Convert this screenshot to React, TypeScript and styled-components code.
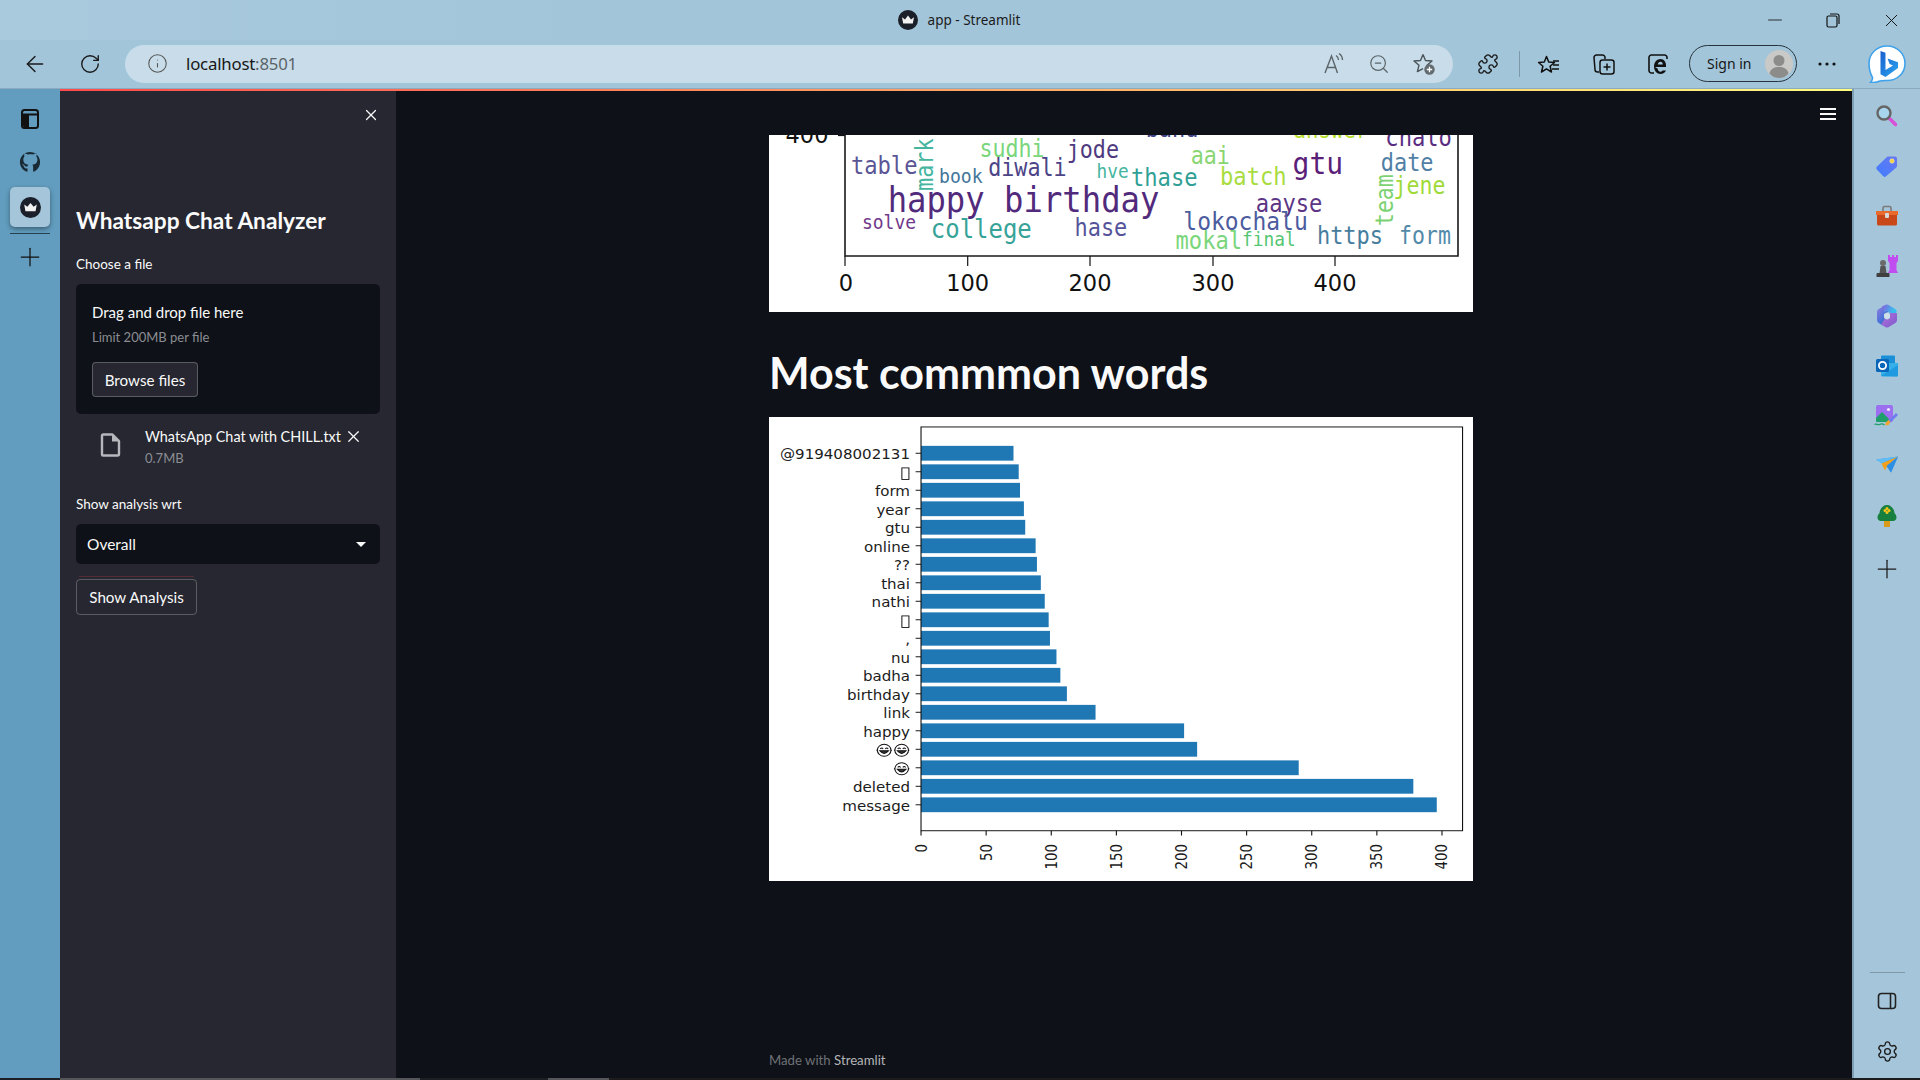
import React from 'react';
import styled, { createGlobalStyle } from 'styled-components';
import { ArrowLeft, RotateCw, Info, ZoomOut, Puzzle, Plus, X, Settings, Minus } from 'lucide-react';

const Global = createGlobalStyle`
  html, body { margin: 0; padding: 0; height: 100%; overflow: hidden; background: #0e1117; }
  #root { height: 100%; }
  * { box-sizing: border-box; }
`;

const UI = `'Lato', 'Noto Sans', sans-serif`;
const CHROME = `'Noto Sans', 'Open Sans', sans-serif`;

const Shell = styled.div`
  height: 100vh; display: flex; flex-direction: column; background: #a3c5da; color: #fafafa; font-family: ${UI};
`;
const TitleBar = styled.div`
  height: 40px; flex: none; display: grid; grid-template-columns: 1fr auto 1fr; align-items: center; color: #1b1b1b;
  background: linear-gradient(90deg, #a9cadd 0%, #a3c5da 30%);
`;
const TitleCenter = styled.div`
  grid-column: 2; display: flex; align-items: center; gap: 10px; font: 400 13.5px ${CHROME}; padding-right: 2px;
`;
const WindowControls = styled.div` grid-column: 3; justify-self: end; display: flex; `;
const WindowButton = styled.div` width: 58px; height: 40px; display: flex; align-items: center; justify-content: center; color: #111; `;
const Toolbar = styled.div`
  height: 49px; flex: none; display: flex; align-items: center; padding: 0 0 1px 7px; border-bottom: 1px solid #8caabd;
`;
const NavButton = styled.div` width: 55px; height: 40px; display: flex; align-items: center; justify-content: center; color: #1a1a1a; `;
const AddressBar = styled.div`
  width: 1328px; height: 38px; margin-left: 8px; flex: none; border-radius: 19px; background: #c8dde9;
  display: flex; align-items: center; padding: 0 7px 0 22px; color: #555;
`;
const AddressText = styled.div` margin-left: 18px; font: 400 16.8px ${CHROME}; color: #161616; letter-spacing: -0.2px; `;
const Port = styled.span` color: #5b6469; `;
const AddressActions = styled.div` margin-left: auto; display: flex; gap: 1px; `;
const ToolButton = styled.div<{ $ml?: number }>`
  width: 44px; height: 40px; flex: none; margin-left: ${p => p.$ml ?? 0}px; display: flex; align-items: center; justify-content: center; color: #1a1a1a;
`;
const ToolSeparator = styled.div` width: 1px; height: 26px; flex: none; background: #7f98a8; margin: 0 7px 0 9px; `;
const SignIn = styled.div`
  width: 108px; height: 37px; margin-left: 9px; flex: none; border: 1.5px solid #26333c; border-radius: 19px;
  display: flex; align-items: center; justify-content: space-between; padding: 0 3px 0 17px; font: 400 14px ${CHROME}; color: #161616;
`;
const Body = styled.div` flex: 1; min-height: 0; display: flex; `;
const Rail = styled.div`
  width: 60px; flex: none; background: #629dbf; padding: 8px 10px 0; display: flex; flex-direction: column; align-items: stretch; color: #111;
`;
const RailItem = styled.div` height: 43px; display: flex; align-items: center; justify-content: center; padding-right: 1px; `;
const RailTile = styled.div`
  height: 40px; margin-top: 4px; border-radius: 5px; background: #a5c6da; box-shadow: 0 2px 5px rgba(0,0,0,.4);
  display: flex; align-items: center; justify-content: center;
`;
const RailDivider = styled.div` height: 1px; margin-top: 6px; background: #26404f; `;
const RailPlus = styled.div` height: 46px; display: flex; align-items: center; justify-content: center; color: #111; padding-right: 1px; `;
const Page = styled.div` flex: 1; min-width: 0; display: flex; flex-direction: column; `;
const Decoration = styled.div` height: 2px; flex: none; background: linear-gradient(90deg, #ff4b4b, #fffd80); `;
const PageRow = styled.div` flex: 1; min-height: 0; display: flex; `;
const Sidebar = styled.aside` width: 336px; flex: none; background: #262730; padding: 15px 16px 0; display: flex; flex-direction: column; `;
const CloseRow = styled.div` display: flex; justify-content: flex-end; height: 16px; color: #fafafa; `;
const SideTitle = styled.h2` margin: 81px 0 0; font: 700 22.7px/36px ${UI}; color: #fafafa; `;
const FieldLabel = styled.div<{ $mt: number }>` margin-top: ${p => p.$mt}px; font: 400 13.5px/20px ${UI}; color: #fafafa; `;
const Uploader = styled.div` margin-top: 10px; height: 130px; background: #0e1117; border-radius: 5px; padding: 16px 16px 0; `;
const DropTitle = styled.div` font: 400 15px/24px ${UI}; `;
const DropLimit = styled.div` margin-top: 3px; font: 400 13px/20px ${UI}; color: #8b8d93; `;
const OutlineButton = styled.div<{ $w: number; $h: number; $bg?: string }>`
  width: ${p => p.$w}px; height: ${p => p.$h}px; display: flex; align-items: center; justify-content: center;
  border: 1px solid rgba(250,250,250,.25); border-radius: 4px; background: ${p => p.$bg ?? 'transparent'}; font: 400 15.2px ${UI}; color: #fafafa;
`;
const BrowseWrap = styled.div` margin-top: 15px; `;
const FileRow = styled.div` display: flex; padding: 12px 0 0 24px; `;
const FileIconBox = styled.div` width: 21px; height: 24px; margin: 7px 24px 0 0; color: #b6b8bd; flex: none; `;
const FileText = styled.div` display: flex; flex-direction: column; `;
const FileNameRow = styled.div` display: flex; align-items: center; height: 20px; font: 400 14.4px ${UI}; white-space: nowrap; `;
const FileX = styled.span` margin-left: 3px; display: flex; color: #fafafa; `;
const FileSize = styled.div` margin-top: 3px; font: 400 13px/18px ${UI}; color: #8b8d93; `;
const Select = styled.div`
  margin-top: 10px; height: 40px; background: #0e1117; border-radius: 5px; padding: 0 14px 0 11px; display: flex; align-items: center; justify-content: space-between; font: 400 15.5px ${UI};
`;
const Caret = styled.div` width: 0; height: 0; border-left: 5px solid transparent; border-right: 5px solid transparent; border-top: 5px solid #fafafa; `;
const FocusLine = styled.div` width: 115px; height: 1px; margin: 12px 0 2px 3px; background: rgba(255,75,75,.22); `;
const Main = styled.main` flex: 1; min-width: 0; position: relative; background: #0e1117; padding: 44px 0 8px 373px; display: flex; flex-direction: column; `;
const Hamburger = styled.div` position: absolute; top: 17px; right: 16px; width: 16px; display: flex; flex-direction: column; gap: 3px; `;
const HamburgerBar = styled.div` height: 2px; background: #fafafa; `;
const Figure = styled.svg` display: block; width: 704px; flex: none; background: #fff; `;
const Heading = styled.h1` margin: 37px 0 20px; font: 700 43px/48px ${UI}; color: #fafafa; white-space: nowrap; `;
const Footer = styled.div` margin-top: auto; font: 400 13.2px/20px ${UI}; color: #6f7177; `;
const FooterBrand = styled.span` color: #b4b5b8; `;
const SidePanel = styled.div`
  width: 68px; flex: none; background: #a5c6da; border-left: 2px solid #7f9fb3; padding: 2px 0 2px; display: flex; flex-direction: column; align-items: center; color: #1a1a1a;
`;
const SideItem = styled.div<{ $mt?: number }>` height: 50px; width: 100%; flex: none; margin-top: ${p => p.$mt ?? 0}px; display: flex; align-items: center; justify-content: center; `;
const SideDivider = styled.div` margin-top: auto; margin-bottom: 3px; width: 35px; height: 1px; background: #7f98a8; flex: none; `;
const BottomStrip = styled.div` height: 2px; flex: none; display: flex; background: #1c1c1c; `;
const StripPiece = styled.div<{ $w: number; $grey?: boolean }>` width: ${p => p.$w}px; background: ${p => (p.$grey ? '#55565a' : '#1c2024')}; `;

/* ---------- chart data ---------- */
const BARS: [string, number][] = [
  ['@919408002131', 71], ['\u25A1', 75], ['form', 76], ['year', 79], ['gtu', 80], ['online', 88], ['??', 89], ['thai', 92], ['nathi', 95],
  ['\u25A1', 98], [',', 99], ['nu', 104], ['badha', 107], ['birthday', 112], ['link', 134], ['happy', 202], ['EE', 212], ['E', 290], ['deleted', 378], ['message', 396],
];

type Word = { t: string; l: number; r: number; b: number; s: number; c: string };
const WORDS: Word[] = [
  { t: 'band', l: 840, r: 955, b: 48, s: 24, c: '#414487' },
  { t: 'answer', l: 1162, r: 1325, b: 52, s: 23, c: '#b5de2b' },
  { t: 'chalo', l: 1362, r: 1507, b: 74, s: 24, c: '#5a2d82' },
  { t: 'table', l: 198, r: 343, b: 158, s: 24, c: '#5a5595' },
  { t: 'sudhi', l: 478, r: 620, b: 108, s: 24, c: '#7ad67a' },
  { t: 'jode', l: 668, r: 782, b: 110, s: 24, c: '#4f3a80' },
  { t: 'diwali', l: 497, r: 668, b: 165, s: 24, c: '#4d4488' },
  { t: 'book', l: 390, r: 485, b: 185, s: 20, c: '#43759a' },
  { t: 'hve', l: 733, r: 803, b: 170, s: 20, c: '#45b5a0' },
  { t: 'thase', l: 808, r: 953, b: 195, s: 24, c: '#30a096' },
  { t: 'aai', l: 938, r: 1023, b: 128, s: 24, c: '#88d572' },
  { t: 'batch', l: 1002, r: 1147, b: 192, s: 24, c: '#a8dc40' },
  { t: 'gtu', l: 1160, r: 1270, b: 158, s: 31, c: '#5a2078' },
  { t: 'date', l: 1352, r: 1467, b: 150, s: 24, c: '#5080a6' },
  { t: 'jene', l: 1380, r: 1493, b: 218, s: 24, c: '#a0da39' },
  { t: 'happy birthday', l: 278, r: 870, b: 272, s: 35, c: '#522a7c' },
  { t: 'aayse', l: 1080, r: 1225, b: 272, s: 24, c: '#5c3585' },
  { t: 'solve', l: 222, r: 340, b: 325, s: 20, c: '#70398a' },
  { t: 'college', l: 372, r: 592, b: 352, s: 26, c: '#36a398' },
  { t: 'hase', l: 685, r: 800, b: 345, s: 24, c: '#55549a' },
  { t: 'lokochalu', l: 922, r: 1193, b: 327, s: 25, c: '#4c5c9e' },
  { t: 'mokal', l: 905, r: 1050, b: 383, s: 24, c: '#7ad67a' },
  { t: 'final', l: 1050, r: 1167, b: 375, s: 20, c: '#55c672' },
  { t: 'https', l: 1213, r: 1357, b: 368, s: 24, c: '#477d9d' },
  { t: 'form', l: 1392, r: 1505, b: 368, s: 24, c: '#528aaa' },
];
const rx = (z: number) => z / 2.178 - 9;
const ry = (z: number) => z / 3 - 14;

const WordCloudFigure = () => (
  <Figure viewBox="0 0 704 177" height={177}>
    <g fontFamily="'DejaVu Sans Mono', monospace">
      {WORDS.map(w => (
        <text key={w.t} x={rx(w.l)} y={ry(w.b)} fontSize={w.s} fill={w.c} textLength={rx(w.r) - rx(w.l)} lengthAdjust="spacingAndGlyphs">{w.t}</text>
      ))}
      <text transform="translate(164 56) rotate(-90)" fontSize={24} fill="#45b5a0" textLength={52.7} lengthAdjust="spacingAndGlyphs">mark</text>
      <text transform="translate(624 91) rotate(-90)" fontSize={24} fill="#7cd272" textLength={51.7} lengthAdjust="spacingAndGlyphs">team</text>
    </g>
    <path d="M76 0V121H689V0" fill="none" stroke="#1a1a1a" strokeWidth="1.6" />
    {[76, 198.7, 321, 444, 566].map(x => <path key={x} d={`M${x} 121V131`} stroke="#111" strokeWidth="1.2" />)}
    <path d="M69 0.5H76" stroke="#111" strokeWidth="1.2" />
    <g fontFamily="'DejaVu Sans', sans-serif" fontSize="22.500" fill="#111" textAnchor="middle">
      <text x={77} y={156}>0</text>
      <text x={198.7} y={156}>100</text>
      <text x={321} y={156}>200</text>
      <text x={444} y={156}>300</text>
      <text x={566} y={156}>400</text>
      <text x={38} y={8}>400</text>
    </g>
  </Figure>
);

const Grin = ({ cx, cy }: { cx: number; cy: number }) => (
  <g stroke="#111" strokeWidth="1" fill="none">
    <circle cx={cx} cy={cy} r={6.2} fill="#fff" />
    <path d={`M${cx - 3.6} ${cy - 1.4}q1.5-1.8 2.6 0M${cx + 1} ${cy - 1.4}q1.5-1.8 2.6 0`} />
    <path d={`M${cx - 4} ${cy + .6}H${cx + 4}Q${cx} ${cy + 6} ${cx - 4} ${cy + .6}Z`} fill="#333" />
    <path d={`M${cx - 7} ${cy}h1M${cx + 6} ${cy}h1`} />
  </g>
);

const X0 = 138.2, XU = 1.184, Y0 = 37.5, YS = 19.14, BH = 15.3;
const BarChartFigure = () => (
  <Figure viewBox="0 0 640 480" height={464} preserveAspectRatio="none">
    {BARS.map(([label, v], i) => {
      const cy = Y0 + i * YS;
      return (
        <g key={i}>
          <rect x={X0} y={cy - BH / 2} width={v * XU} height={BH} fill="#1f77b4" />
          <path d={`M${X0 - 4.9} ${cy}H${X0}`} stroke="#111" strokeWidth="1" />
          {label === 'E' || label === 'EE' ? (
            <>
              <Grin cx={120.6} cy={cy + 1} />
              {label === 'EE' && <Grin cx={104.7} cy={cy + 1} />}
            </>
          ) : label === '\u25A1' ? (
            <rect x={120.8} y={cy - 4} width={6.4} height={12} fill="#fff" stroke="#111" strokeWidth="0.9" />
          ) : (
            <text x={128.2} y={cy + 6.3} textAnchor="end" fontFamily="'DejaVu Sans', sans-serif" fontSize="13.7" fill="#1c1c1c">{label}</text>
          )}
        </g>
      );
    })}
    <rect x={X0} y={10.3} width={492.3} height={417.7} fill="none" stroke="#111" strokeWidth="1" />
    {[0, 50, 100, 150, 200, 250, 300, 350, 400].map(v => {
      const x = X0 + v * XU;
      return (
        <g key={v}>
          <path d={`M${x} 428V433`} stroke="#111" strokeWidth="1" />
          <text transform={`translate(${x + 5} 441.7) rotate(-90)`} textAnchor="end" fontFamily="'DejaVu Sans', sans-serif" fontSize="13.89" fill="#1c1c1c">{v}</text>
        </g>
      );
    })}
  </Figure>
);

/* ---------- icons ---------- */
const StreamlitMark = ({ size = 20 }: { size?: number }) => (
  <svg width={size} height={size} viewBox="0 0 20 20">
    <circle cx="10" cy="10" r="10" fill="#1b1f2a" />
    <path d="M4 7.2l3 2.2L10 5.6l3 3.8 3-2.2-1.2 6.4H5.2z" fill="#f2f2f2" />
  </svg>
);
const TabsIcon = () => (
  <svg width="20" height="22" viewBox="0 0 20 22" fill="none">
    <rect x="2" y="2" width="16" height="18" rx="2.5" stroke="#111" strokeWidth="2" />
    <path d="M2 6.5h16" stroke="#111" strokeWidth="2" />
    <path d="M3 7h6v12H4.5A1.5 1.5 0 0 1 3 17.5z" fill="#111" />
  </svg>
);
const GithubMark = () => (
  <svg width="22" height="22" viewBox="0 0 24 24">
    <path fill="#1a2a35" d="M12 1C5.9 1 1 5.9 1 12c0 4.9 3.2 9 7.5 10.5.5.1.8-.2.8-.5v-3c-3 .6-3.7-1.3-3.9-2-.1-.4-.7-1.4-1.2-1.7-.4-.2-1-.8 0-.8.9 0 1.6.9 1.8 1.2 1.1 1.8 2.8 1.3 3.4 1 .1-.8.4-1.3.8-1.6-2.7-.3-5.5-1.4-5.5-6 0-1.3.5-2.4 1.2-3.2-.1-.3-.5-1.5.1-3.2 0 0 1-.3 3.4 1.2 1-.3 2-.4 3-.4s2 .1 3 .4c2.3-1.6 3.4-1.2 3.4-1.2.7 1.7.2 2.9.1 3.2.8.8 1.2 1.9 1.2 3.2 0 4.6-2.8 5.7-5.5 6 .4.4.8 1.1.8 2.2V22c0 .3.2.7.8.5C19.8 21 23 16.9 23 12 23 5.9 18.1 1 12 1z" />
  </svg>
);
const ReadAloud = () => (
  <svg width="24" height="24" viewBox="0 0 24 24" fill="none" stroke="#5b6469" strokeWidth="1.4">
    <path d="M3 21L9.5 4l6 17M5.2 15.5h8.6" />
    <path d="M14 3.5c1.6 1 2.5 2.6 2.5 4.5M17 1.5c2.2 1.4 3.5 3.8 3.5 6.5" />
  </svg>
);
const FavAdd = () => (
  <svg width="24" height="24" viewBox="0 0 24 24" fill="none">
    <path d="M11 2.500l2.500 6 6.500.5-5 4.200 1 3M11 2.500L8.500 8.500l-6.500.5 5 4.200-1.600 6.400L11 16.600" stroke="#4a545a" strokeWidth="1.4" strokeLinejoin="round" />
    <circle cx="17.500" cy="17.500" r="5.200" fill="#626b70" />
    <path d="M17.500 14.800v5.400M14.800 17.500h5.400" stroke="#fff" strokeWidth="1.3" />
  </svg>
);
const FavList = () => (
  <svg width="24" height="24" viewBox="0 0 24 24" fill="none" stroke="#111" strokeWidth="1.5" strokeLinejoin="round">
    <path d="M9.500 2.500l2.300 5.600 5.700.4-4.400 3.800 1.400 5.700-5-3.100-5 3.100 1.400-5.700L1.600 8.500l5.700-.4z" transform="translate(0 2)" />
    <path d="M16 9h6M16 13h6M15 17h7" />
  </svg>
);
const Collections = () => (
  <svg width="24" height="24" viewBox="0 0 24 24" fill="none" stroke="#111" strokeWidth="1.5" strokeLinejoin="round">
    <path d="M7 20H5.500A2.500 2.500 0 0 1 3 17.500L2 5.500A2.500 2.500 0 0 1 4.500 3h6A2.500 2.500 0 0 1 13 5.500V7" />
    <rect x="8" y="8" width="14" height="14" rx="2.500" />
    <path d="M15 11.500v7M11.500 15h7" />
  </svg>
);
const IEIcon = () => (
  <svg width="24" height="24" viewBox="0 0 24 24" fill="none">
    <path d="M8 21H5.500A2.500 2.500 0 0 1 3 18.500V5.500A2.500 2.500 0 0 1 5.500 3h13A2.500 2.500 0 0 1 21 5.500V7" stroke="#111" strokeWidth="1.6" />
    <path d="M9 15h11c.5-5-2-8-5.500-8S8 10 8 14.500s3 7.500 6.500 7.500c2.600 0 4.500-1.300 5.500-3.500h-3.500c-.5.8-1.200 1.200-2 1.200-1.700 0-2.700-1.200-2.700-2.900zM11.800 12.500c.2-1.500 1.300-2.800 2.700-2.800 1.500 0 2.300 1.200 2.300 2.800z" fill="#111" fillRule="evenodd" />
  </svg>
);
const Avatar = () => (
  <svg width="28" height="28" viewBox="0 0 28 28">
    <circle cx="14" cy="14" r="14" fill="#c9c9c7" />
    <circle cx="14" cy="10.500" r="5.500" fill="#8c8c8a" />
    <path d="M4.500 23.500c1-5 5-6.500 9.500-6.500s8.500 1.500 9.500 6.500c-2.500 3-5.700 4.500-9.500 4.500s-7-1.500-9.500-4.500z" fill="#8c8c8a" />
  </svg>
);
const BingLogo = () => (
  <svg width="38" height="38" viewBox="0 0 38 38">
    <defs>
      <linearGradient id="bg1" x1="0" y1="0" x2="1" y2="1"><stop offset="0" stopColor="#1a5fd0" /><stop offset="1" stopColor="#2aa6ee" /></linearGradient>
    </defs>
    <path d="M19 1c10 0 18 7.500 18 17.500 0 10-8 17-18 17-2.500 0-4.500-.2-7 .6-3 1-7 1.700-9.500 1.500 1.500-1.600 2.300-3.400 2-5.300C2.500 29 1 24 1 18.500 1 8.500 9 1 19 1z" fill="#fff" stroke="#3fa2ea" strokeWidth="1.600" />
    <path d="M12.500 6l5 1.800v17.200l7.500-4.400-3.400-1.700-2.100-5.300 10.500 3.700v5.600L17.500 32l-5-2.800z" fill="url(#bg1)" />
  </svg>
);
const Magnifier = () => (
  <svg width="24" height="24" viewBox="0 0 24 24">
    <path d="M13.500 13.500l7 7" stroke="#d84fd8" strokeWidth="3.500" strokeLinecap="round" />
    <circle cx="9" cy="9" r="6.500" fill="#a8d6ee" stroke="#666" strokeWidth="2.400" />
  </svg>
);
const Tag = () => (
  <svg width="24" height="24" viewBox="0 0 24 24">
    <defs><linearGradient id="tg" x1="0" y1="1" x2="1" y2="0"><stop offset="0" stopColor="#3f7dff" /><stop offset="1" stopColor="#6a78f0" /></linearGradient></defs>
    <path d="M12.500 2.500H20a2 2 0 0 1 2 2v7.500a2 2 0 0 1-.7 1.500L11 22.300a2 2 0 0 1-2.700 0L1.800 15.500a2 2 0 0 1 0-2.700z" fill="url(#tg)" />
    <circle cx="17" cy="7" r="2.200" fill="#f7d23e" stroke="#f7f0b0" strokeWidth=".6" />
  </svg>
);
const Toolbox = () => (
  <svg width="24" height="22" viewBox="0 0 24 22">
    <path d="M8 6V3a1.500 1.500 0 0 1 1.500-1.500h5A1.500 1.500 0 0 1 16 3v3" fill="none" stroke="#7a7a7a" strokeWidth="1.600" />
    <path d="M1 6h22v4H1z" fill="#e86a2c" />
    <path d="M2 10h20v9a1.500 1.500 0 0 1-1.500 1.500h-17A1.500 1.500 0 0 1 2 19z" fill="#c8481a" />
    <rect x="10" y="8" width="4" height="5" rx="1" fill="#d9d9d9" />
  </svg>
);
const Chess = () => (
  <svg width="24" height="24" viewBox="0 0 24 24">
    <path d="M14 2h2v2h2V2h2v2h2V2h2v6l-1.500 2v7l1.500 3H14l1.500-3v-7L14 8z" fill="#c04df0" transform="translate(-1 -1)" />
    <circle cx="8" cy="9" r="3" fill="#6a6a6a" />
    <path d="M5.500 12h5l1 7h-7z" fill="#555" />
    <path d="M2.500 19h11a1 1 0 0 1 1 1v3h-13v-3a1 1 0 0 1 1-1z" fill="#3f3f3f" />
  </svg>
);
const M365 = () => (
  <svg width="22" height="24" viewBox="0 0 22 24" fill="none">
    <defs>
      <linearGradient id="m1" x1="0" y1="0" x2="0.6" y2="1"><stop offset="0" stopColor="#7a78e0" /><stop offset="1" stopColor="#2f6fd0" /></linearGradient>
      <linearGradient id="m2" x1="0" y1="0" x2="1" y2="0.4"><stop offset="0" stopColor="#7a6fe0" /><stop offset="1" stopColor="#38bdee" /></linearGradient>
      <linearGradient id="m3" x1="0" y1="0" x2="1" y2="1"><stop offset="0" stopColor="#b06fd8" /><stop offset="1" stopColor="#8a5fd0" /></linearGradient>
    </defs>
    <path d="M11 4.500L4.500 8v8l4 2.500" stroke="url(#m1)" strokeWidth="7" strokeLinejoin="round" />
    <path d="M7 5.500L11 3.500l6.500 4-2 3" stroke="url(#m2)" strokeWidth="6" strokeLinejoin="round" />
    <path d="M17.500 9v7L11 20l-4-2.500" stroke="url(#m3)" strokeWidth="7" strokeLinejoin="round" />
    <circle cx="11" cy="12" r="3" fill="#cfe0ea" />
  </svg>
);
const Outlook = () => (
  <svg width="24" height="24" viewBox="0 0 24 24">
    <rect x="6" y="1.500" width="14" height="10" rx="1" fill="#1a8fd8" />
    <path d="M6 9h17v12a1.500 1.500 0 0 1-1.500 1.500H7.500A1.500 1.500 0 0 1 6 21z" fill="#36b0e8" />
    <path d="M6 22l17-11v10a1.500 1.500 0 0 1-1.500 1.500z" fill="#1e9ae0" />
    <rect x="1" y="5" width="13" height="13" rx="1.500" fill="#0a66b8" />
    <circle cx="7.500" cy="11.500" r="3.600" fill="none" stroke="#fff" strokeWidth="1.800" />
  </svg>
);
const Designer = () => (
  <svg width="26" height="24" viewBox="0 0 26 24">
    <rect x="2" y="1" width="17" height="17" rx="2" fill="#9b6ff0" />
    <circle cx="14.500" cy="5.500" r="1.600" fill="#f0e8ff" />
    <path d="M2 14l6-6 7 7-2 3H3a1 1 0 0 1-1-1z" fill="#1f9f6a" />
    <path d="M14 17l8-8 2 2-8 8z" fill="#6f7cf0" />
    <path d="M11.500 19l3-3 2 2-2 3-3 .5z" fill="#f4a62a" />
    <path d="M0.500 20.500c2-1.500 3 1 5 0s3-1 5 .5" fill="none" stroke="#1f9f6a" strokeWidth="1.300" />
  </svg>
);
const PlaneIcon = () => (
  <svg width="24" height="20" viewBox="0 0 24 20">
    <path d="M1 3.500L23 .5 16 16.500 11.500 10z" fill="#3aa0ef" />
    <path d="M1 3.500L23 .5 6.500 7.500z" fill="#5fbcf5" />
    <path d="M23 .5L6.500 7.500l3.500 7 2.500-5z" fill="#f4a01c" />
    <path d="M23 .5L11.500 10 16 16.500z" fill="#2f8fe4" />
  </svg>
);
const TreeIcon = () => (
  <svg width="20" height="24" viewBox="0 0 20 24">
    <rect x="7" y="16" width="6" height="7" fill="#d99a1a" />
    <path d="M10 1c4 0 7 3.500 7.500 8 1.500 1.500 2 3 2 4.500 0 2-1.500 3.500-3.500 3.500H4c-2 0-3.500-1.500-3.500-3.500 0-1.500.5-3 2-4.500C3 4.500 6 1 10 1z" fill="#17803f" />
    <g fill="#f6c418"><circle cx="10" cy="4.500" r="1.500" /><circle cx="10" cy="8.500" r="1.500" /><circle cx="8" cy="6.500" r="1.500" /><circle cx="12" cy="6.500" r="1.500" /></g>
  </svg>
);
const SplitPanel = () => (
  <svg width="20" height="18" viewBox="0 0 20 18" fill="none" stroke="#222" strokeWidth="1.600">
    <rect x="1.500" y="1.500" width="17" height="15" rx="3" />
    <path d="M13.500 1.500v15" />
  </svg>
);
const FileGlyph = () => (
  <svg width="21" height="24" viewBox="0 0 21 24" fill="none" stroke="currentColor" strokeWidth="2.400" strokeLinejoin="round">
    <path d="M2 2.500a1 1 0 0 1 1-1h9.500L19 8v13a1.500 1.500 0 0 1-1.500 1.500H3A1 1 0 0 1 2 21.500z" />
    <path d="M12 1.500V8.500h7" fill="currentColor" stroke="none" />
  </svg>
);

export default function App() {
  return (
    <Shell>
      <Global />
      <TitleBar>
        <TitleCenter><StreamlitMark />app - Streamlit</TitleCenter>
        <WindowControls>
          <WindowButton><Minus size={22} strokeWidth={0.9} /></WindowButton>
          <WindowButton>
            <svg width="14" height="15" viewBox="0 0 14 15" fill="none" stroke="#111" strokeWidth="1.2">
              <rect x="1" y="3" width="10" height="11" rx="1.500" />
              <path d="M4 1h7a2 2 0 0 1 2 2v8" />
            </svg>
          </WindowButton>
          <WindowButton><X size={21} strokeWidth={1.1} /></WindowButton>
        </WindowControls>
      </TitleBar>
      <Toolbar>
        <NavButton><ArrowLeft size={26} strokeWidth={1.3} /></NavButton>
        <NavButton><RotateCw size={22} strokeWidth={1.5} /></NavButton>
        <AddressBar>
          <Info size={21} strokeWidth={1.2} />
          <AddressText>localhost<Port>:8501</Port></AddressText>
          <AddressActions>
            <ToolButton><ReadAloud /></ToolButton>
            <ToolButton><ZoomOut size={22} strokeWidth={1.3} color="#5b6469" /></ToolButton>
            <ToolButton><FavAdd /></ToolButton>
          </AddressActions>
        </AddressBar>
        <ToolButton $ml={13}><Puzzle size={22} strokeWidth={1.5} /></ToolButton>
        <ToolSeparator />
        <ToolButton><FavList /></ToolButton>
        <ToolButton $ml={11}><Collections /></ToolButton>
        <ToolButton $ml={10}><IEIcon /></ToolButton>
        <SignIn>Sign in<Avatar /></SignIn>
        <ToolButton $ml={8}>
          <svg width="18" height="4" viewBox="0 0 18 4" fill="#111"><circle cx="2" cy="2" r="1.600" /><circle cx="9" cy="2" r="1.600" /><circle cx="16" cy="2" r="1.600" /></svg>
        </ToolButton>
        <ToolButton $ml={16}><BingLogo /></ToolButton>
      </Toolbar>
      <Body>
        <Rail>
          <RailItem><TabsIcon /></RailItem>
          <RailItem><GithubMark /></RailItem>
          <RailTile><StreamlitMark size={21} /></RailTile>
          <RailDivider />
          <RailPlus><Plus size={30} strokeWidth={1} /></RailPlus>
        </Rail>
        <Page>
          <Decoration />
          <PageRow>
            <Sidebar>
              <CloseRow><X size={18} strokeWidth={1.6} /></CloseRow>
              <SideTitle>Whatsapp Chat Analyzer</SideTitle>
              <FieldLabel $mt={15}>Choose a file</FieldLabel>
              <Uploader>
                <DropTitle>Drag and drop file here</DropTitle>
                <DropLimit>Limit 200MB per file</DropLimit>
                <BrowseWrap><OutlineButton $w={106} $h={35} $bg="#262730">Browse files</OutlineButton></BrowseWrap>
              </Uploader>
              <FileRow>
                <FileIconBox><FileGlyph /></FileIconBox>
                <FileText>
                  <FileNameRow>WhatsApp Chat with CHILL.txt<FileX><X size={19} strokeWidth={1.5} /></FileX></FileNameRow>
                  <FileSize>0.7MB</FileSize>
                </FileText>
              </FileRow>
              <FieldLabel $mt={27}>Show analysis wrt</FieldLabel>
              <Select>Overall<Caret /></Select>
              <FocusLine />
              <OutlineButton $w={121} $h={36}>Show Analysis</OutlineButton>
            </Sidebar>
            <Main>
              <Hamburger><HamburgerBar /><HamburgerBar /><HamburgerBar /></Hamburger>
              <WordCloudFigure />
              <Heading>Most commmon words</Heading>
              <BarChartFigure />
              <Footer>Made with <FooterBrand>Streamlit</FooterBrand></Footer>
            </Main>
          </PageRow>
        </Page>
        <SidePanel>
          <SideItem><Magnifier /></SideItem>
          <SideItem><Tag /></SideItem>
          <SideItem><Toolbox /></SideItem>
          <SideItem><Chess /></SideItem>
          <SideItem><M365 /></SideItem>
          <SideItem><Outlook /></SideItem>
          <SideItem><Designer /></SideItem>
          <SideItem><PlaneIcon /></SideItem>
          <SideItem><TreeIcon /></SideItem>
          <SideItem $mt={3}><Plus size={30} strokeWidth={1} /></SideItem>
          <SideDivider />
          <SideItem><SplitPanel /></SideItem>
          <SideItem><Settings size={23} strokeWidth={1.4} /></SideItem>
        </SidePanel>
      </Body>
      <BottomStrip>
        <StripPiece $w={60} />
        <StripPiece $w={360} $grey />
        <StripPiece $w={128} />
        <StripPiece $w={61} $grey />
      </BottomStrip>
    </Shell>
  );
}
